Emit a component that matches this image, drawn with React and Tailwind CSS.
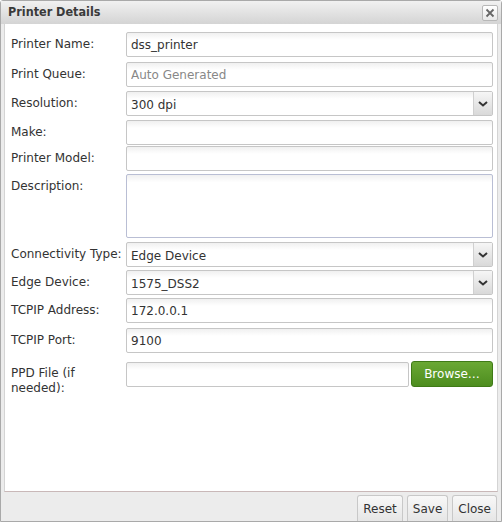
import React from 'react';

const font = { fontFamily: '"DejaVu Sans", sans-serif' };

const inputCls =
  'block h-[25px] w-full rounded-[2px] border border-[#c6c6c6] bg-gradient-to-b from-[#f0f0f0] to-white to-[30%] px-[4px] text-[12px] text-[#333] outline-none';

function Row({ label, children, className = '' }) {
  return (
    <div className={`flex items-start ${className}`}>
      <label className="w-[115px] shrink-0 pt-[5px] text-[12px] leading-[15px] text-[#333]">{label}</label>
      <div className="flex-1">{children}</div>
    </div>
  );
}

function Select({ value }) {
  return (
    <div className="relative h-[25px] w-full rounded-[2px] border border-[#c6c6c6] bg-gradient-to-b from-[#f0f0f0] to-white to-[30%]">
      <span className="absolute left-[4px] top-[4px] text-[12px] text-[#333]">{value}</span>
      <span className="absolute right-0 top-0 flex h-[23px] w-[19px] items-center justify-center border-l border-[#d0d0d0] bg-gradient-to-b from-[#f6f6f6] to-[#d9d9d9]">
        <svg width="10" height="6" viewBox="0 0 10 6">
          <path d="M1 1 L5 4.5 L9 1" fill="none" stroke="#333" strokeWidth="2" />
        </svg>
      </span>
    </div>
  );
}

function FooterButton({ children }) {
  return (
    <button
      type="button"
      className="h-[26px] rounded-t-[3px] border border-b-0 border-[#c8c8c8] bg-gradient-to-b from-[#f8f8f8] to-[#e6e6e6] px-[5px] text-[12px] text-[#333]"
    >
      {children}
    </button>
  );
}

export default function App() {
  return (
    <div className="h-[524px] w-[502px] bg-white" style={font}>
      <div className="flex h-[522px] w-[502px] flex-col rounded-t-[3px] border border-[#a9a9a9] bg-[#ececec]">
        {/* title bar */}
        <div className="flex h-[23px] items-center justify-between bg-gradient-to-b from-[#f1f1f1] to-[#d4d4d4] pl-[7px] pr-[3px]">
          <span
            className="text-[12.5px] font-bold text-[#3a3a3a]"
            style={{ fontFamily: '"DejaVu Sans Condensed", "DejaVu Sans", sans-serif' }}
          >
            Printer Details
          </span>
          <button
            type="button"
            className="flex h-[16px] w-[16px] items-center justify-center rounded-[2px] border border-[#b8b8b8] bg-gradient-to-b from-white to-[#e8e8e8]"
          >
            <svg width="10" height="10" viewBox="0 0 10 10">
              <path d="M1.5 1.5 L8.5 8.5 M8.5 1.5 L1.5 8.5" stroke="#666" strokeWidth="1.8" />
            </svg>
          </button>
        </div>

        {/* body */}
        <div className="mx-[3px] flex-1 border-x border-b border-[#c9b8b8] border-x-[#d4d4d4] bg-white pl-[6px] pr-[4px] pt-[8px]">
          <div className="flex flex-col">
            <Row label="Printer Name:">
              <input className={inputCls} defaultValue="dss_printer" />
            </Row>
            <Row label="Print Queue:" className="mt-[5px]">
              <input className={`${inputCls} placeholder:text-[#888]`} placeholder="Auto Generated" />
            </Row>
            <Row label="Resolution:" className="mt-[4px]">
              <Select value="300 dpi" />
            </Row>
            <Row label="Make:" className="mt-[4px]">
              <input className={inputCls} />
            </Row>
            <Row label="Printer Model:" className="mt-[1px]">
              <input className={inputCls} />
            </Row>
            <Row label="Description:" className="mt-[3px]">
              <textarea className="block h-[64px] w-full resize-none rounded-[2px] border border-[#b9bed4] bg-gradient-to-b from-[#f0f0f0] to-white to-[12%] px-[4px] text-[12px] outline-none" />
            </Row>
            <Row label="Connectivity Type:" className="mt-[4px]">
              <Select value="Edge Device" />
            </Row>
            <Row label="Edge Device:" className="mt-[3px]">
              <Select value="1575_DSS2" />
            </Row>
            <Row label="TCPIP Address:" className="mt-[3px]">
              <input className={inputCls} defaultValue="172.0.0.1" />
            </Row>
            <Row label="TCPIP Port:" className="mt-[5px]">
              <input className={inputCls} defaultValue="9100" />
            </Row>
            <Row label="PPD File (if needed):" className="mt-[8px]">
              <div className="flex items-center gap-[2px]">
                <input className={`${inputCls} !w-[283px]`} />
                <button
                  type="button"
                  className="h-[26px] w-[82px] rounded-[3px] border border-[#3f7a17] bg-gradient-to-b from-[#6aa834] to-[#4d8d1f] text-[12px] text-white"
                >
                  Browse…
                </button>
              </div>
            </Row>
          </div>
        </div>

        {/* button pane */}
        <div className="flex h-[29px] items-end justify-end gap-[4px] pl-[4px] pr-[4px]">
          <FooterButton>Reset</FooterButton>
          <FooterButton>Save</FooterButton>
          <FooterButton>Close</FooterButton>
        </div>
      </div>
    </div>
  );
}
